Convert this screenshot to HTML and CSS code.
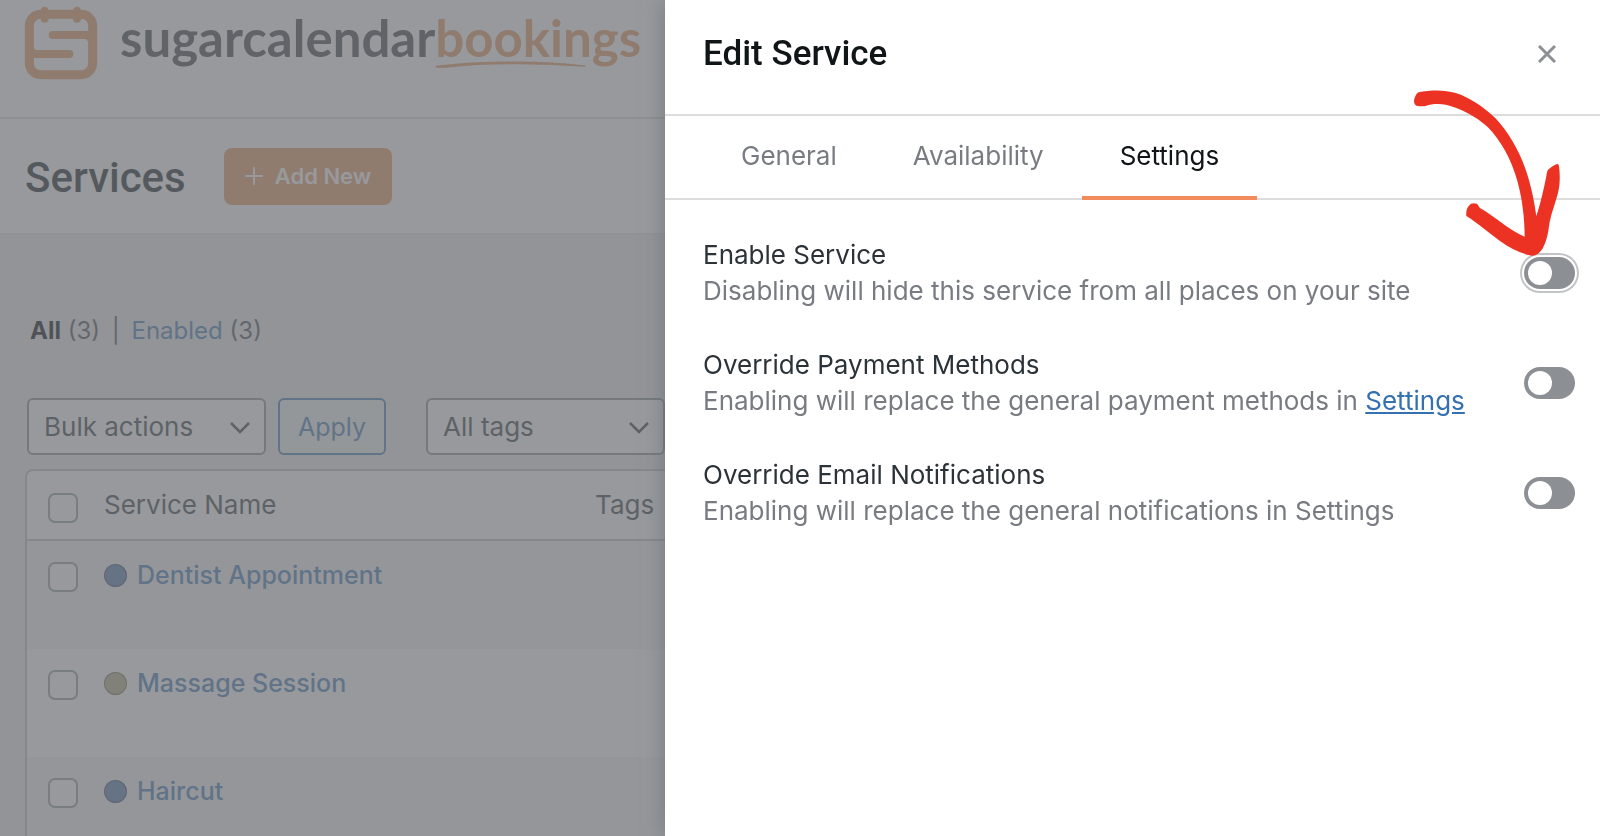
FILE: index.html
```html
<!DOCTYPE html>
<html lang="en">
<head>
    <meta charset="UTF-8">
    <meta name="viewport" content="width=device-width, initial-scale=1.0">
    <title>Services - Sugar Calendar Bookings</title>
    <link rel="stylesheet" href="styles.css">
</head>
<body>
    <div class="page">
        <header class="brand">
            <svg class="brand-icon" viewBox="72 18 222 222" fill="none" stroke="currentColor" aria-hidden="true">
                <rect x="88" y="43" width="190" height="181" rx="34" stroke-width="27"/>
                <path d="M264 105H158M100 162H208" stroke-width="24" stroke-linecap="round"/>
                <path d="M100 138Q101 150 112 151H100ZM265 129Q264 118 253 116H265Z" fill="currentColor" stroke="none"/>
                <g fill="currentColor" stroke="none">
                    <circle cx="134" cy="31" r="11"/><circle cx="134" cy="56" r="12"/>
                    <circle cx="231" cy="31" r="11"/><circle cx="231" cy="56" r="12"/>
                </g>
            </svg>
            <div class="brand-name">sugarcalendar<span class="brand-accent">bookings<svg class="brand-swash" viewBox="0 0 454 20" aria-hidden="true"><path d="M2 14Q110 0 240 1Q360 1 451 13Q456 18 448 17Q340 8 230 9Q120 9 50 18Q20 21 2 19Z" fill="currentColor"/></svg></span></div>
        </header>

        <div class="title-bar">
            <h1>Services</h1>
            <button type="button" class="add-new">
                <svg viewBox="0 0 18 18" aria-hidden="true"><path d="M9 1V17M1 9H17" stroke="currentColor" stroke-width="2" stroke-linecap="round"/></svg>
                Add New
            </button>
        </div>

        <main class="content">
            <div class="views">
                <a href="#" class="current">All</a> <span>(3)</span>
                <span class="divider">|</span>
                <a href="#">Enabled</a> <span>(3)</span>
            </div>

            <div class="filters">
                <div class="select-box">
                    <select aria-label="Bulk actions">
                        <option>Bulk actions</option>
                    </select>
                    <svg viewBox="0 0 20 12" aria-hidden="true"><path d="M1 1L10 10L19 1" fill="none" stroke="currentColor" stroke-width="2.5"/></svg>
                </div>
                <button type="button" class="apply">Apply</button>
                <div class="select-box tags-box">
                    <select aria-label="Tags">
                        <option>All tags</option>
                    </select>
                    <svg viewBox="0 0 20 12" aria-hidden="true"><path d="M1 1L10 10L19 1" fill="none" stroke="currentColor" stroke-width="2.5"/></svg>
                </div>
            </div>

            <table class="services">
                <thead>
                    <tr>
                        <th class="check"><input type="checkbox" aria-label="Select all"></th>
                        <th class="name">Service Name</th>
                        <th>Tags</th>
                    </tr>
                </thead>
                <tbody>
                    <tr>
                        <td class="check"><input type="checkbox" aria-label="Select Dentist Appointment"></td>
                        <td><a href="#"><span class="dot blue"></span>Dentist Appointment</a></td>
                        <td></td>
                    </tr>
                    <tr>
                        <td class="check"><input type="checkbox" aria-label="Select Massage Session"></td>
                        <td><a href="#"><span class="dot olive"></span>Massage Session</a></td>
                        <td></td>
                    </tr>
                    <tr>
                        <td class="check"><input type="checkbox" aria-label="Select Haircut"></td>
                        <td><a href="#"><span class="dot blue"></span>Haircut</a></td>
                        <td></td>
                    </tr>
                </tbody>
            </table>
        </main>
    </div>

    <div class="overlay"></div>

    <aside class="drawer" role="dialog" aria-labelledby="drawer-title">
        <div class="drawer-header">
            <h2 id="drawer-title">Edit Service</h2>
            <button type="button" class="close" aria-label="Close">
                <svg viewBox="0 0 18 18" aria-hidden="true"><path d="M1 1L17 17M17 1L1 17" stroke="currentColor" stroke-width="3"/></svg>
            </button>
        </div>

        <div class="tabs" role="tablist">
            <button type="button" role="tab">General</button>
            <button type="button" role="tab">Availability</button>
            <button type="button" role="tab" class="active" aria-selected="true">Settings</button>
        </div>

        <div class="settings">
            <div class="setting">
                <div>
                    <label for="enable-service">Enable Service</label>
                    <p>Disabling will hide this service from all places on your site</p>
                </div>
                <input type="checkbox" class="toggle focused" id="enable-service">
            </div>
            <div class="setting">
                <div>
                    <label for="override-payment">Override Payment Methods</label>
                    <p>Enabling will replace the general payment methods in <a href="#">Settings</a></p>
                </div>
                <input type="checkbox" class="toggle" id="override-payment">
            </div>
            <div class="setting">
                <div>
                    <label for="override-email">Override Email Notifications</label>
                    <p>Enabling will replace the general notifications in Settings</p>
                </div>
                <input type="checkbox" class="toggle" id="override-email">
            </div>
        </div>

        <svg class="arrow" viewBox="160 88 450 504" aria-hidden="true">
            <path d="M176 98C215 90 256 90 288 100C330 113 372 142 406 174C442 210 478 272 496 324C514 374 525 430 530 470C543 430 552 390 560 350C562 336 563 331 569 327C578 320 585 315 592 313Q597 312 598 320C602 350 601 378 594 404C584 440 573 466 568 500C564 530 558 552 548 568Q534 589 516 588C484 582 452 566 420 543C386 519 352 488 320 469C318 452 324 438 334 432Q342 429 352 432C357 438 358 442 362 446C385 459 410 478 434 495C456 510 477 524 495 531C495 480 489 420 472 360C456 302 424 242 384 202C350 170 300 146 262 136C238 131 215 133 200 138Q188 142 170 138Q158 130 166 112Q170 102 176 98Z" fill="#ec3323"/>
        </svg>
    </aside>
</body>
</html>
```

FILE: styles.css
```css
* {
    box-sizing: border-box;
}
body {
    margin: 0;
    font-family: Inter, "Liberation Sans", sans-serif;
    font-size: 26px;
    line-height: 36px;
    color: #50575e;
    background-color: #eeeeef;
}
h1, h2, p {
    margin: 0;
}
h1, h2 {
    font-family: Roboto, sans-serif;
    font-weight: 500;
}
button, select, input {
    font: inherit;
    margin: 0;
}
a {
    color: #4a80b8;
    text-decoration: none;
}

.page {
    height: 100vh;
    overflow: hidden;
}
.brand {
    display: flex;
    gap: 22px;
    height: 119px;
    padding: 6px 24px 0;
    background-color: #fff;
    border-bottom: 2px solid #dcdcde;
}
.brand-icon {
    width: 74px;
    height: 74px;
    color: #e89a68;
}
.brand-name {
    font-family: Lato, sans-serif;
    font-size: 51px;
    font-weight: 700;
    line-height: 64px;
    color: #484f55;
}
.brand-accent {
    position: relative;
    color: #e89a68;
}
.brand-swash {
    position: absolute;
    left: 0;
    bottom: 0;
    width: 151px;
    height: 7px;
}

.title-bar {
    display: flex;
    align-items: center;
    gap: 38px;
    height: 116px;
    padding: 0 25px;
    background-color: #fff;
    border-bottom: 2px solid #e8e8ea;
}
h1 {
    padding-top: 3px;
    font-size: 42px;
    line-height: 50px;
    color: #1d2a2e;
}
.add-new {
    display: flex;
    align-items: center;
    gap: 12px;
    height: 57px;
    padding: 0 21px;
    border: none;
    border-radius: 8px;
    background-color: #e89a68;
    color: #fff;
    font-size: 22px;
    font-weight: 600;
}
.add-new svg {
    width: 18px;
    height: 18px;
}

.content {
    padding: 78px 25px 0;
}
.views {
    padding-left: 5px;
    font-size: 24px;
}
.views .current {
    color: #101517;
    font-weight: 700;
}
.divider {
    margin: 0 5px;
}
.filters {
    display: flex;
    gap: 12px;
    margin: 49px 2px 14px;
}
.select-box {
    position: relative;
    width: 239px;
    color: #3c464b;
}
.tags-box {
    margin-left: 28px;
}
.select-box select {
    appearance: none;
    width: 100%;
    height: 57px;
    padding: 0 15px;
    border: 2px solid #8c9599;
    border-radius: 6px;
    background-color: #fff;
    color: inherit;
}
.select-box svg {
    position: absolute;
    right: 16px;
    top: 24px;
    width: 20px;
    height: 12px;
}
.apply {
    height: 57px;
    padding: 0 18px;
    border: 2px solid #4a80b8;
    border-radius: 6px;
    background-color: #f6f7f7;
    color: #4a80b8;
    font-size: 25px;
}

.services {
    width: 100%;
    table-layout: fixed;
    border: 2px solid #c3c4c7;
    border-radius: 8px;
    border-spacing: 0;
    background-color: #fff;
}
th, td {
    padding: 0;
    text-align: left;
    vertical-align: top;
}
th {
    height: 70px;
    padding-top: 16px;
    border-bottom: 2px solid #c3c4c7;
    color: #3c464b;
    font-weight: 400;
}
td {
    height: 108px;
    padding-top: 16px;
    font-size: 25px;
    font-weight: 500;
}
tbody tr:nth-child(odd) {
    background-color: #f6f6f7;
}
.check {
    width: 77px;
    padding-left: 21px;
    line-height: 0;
}
td.check {
    padding-top: 21px;
}
th.check {
    padding-top: 22px;
}
.name {
    width: 491px;
}
.check input {
    appearance: none;
    width: 30px;
    height: 30px;
    border: 2px solid #98a0a3;
    border-radius: 7px;
    background-color: #fff;
}
td a {
    display: flex;
    align-items: center;
    gap: 10px;
}
.dot {
    width: 23px;
    height: 23px;
    border: 1px solid rgba(0, 0, 0, 0.3);
    border-radius: 50%;
}
.blue {
    background-color: #5a80b0;
}
.olive {
    background-color: #b4ae8c;
}

.overlay {
    position: fixed;
    inset: 0;
    background-color: rgba(107, 110, 114, 0.7);
}

.drawer {
    position: fixed;
    top: 0;
    right: 0;
    bottom: 0;
    width: 935px;
    background-color: #fff;
    box-shadow: 0 0 20px rgba(90, 105, 110, 0.6);
}
.drawer-header {
    display: flex;
    justify-content: space-between;
    align-items: center;
    padding: 35px 44px 41px 38px;
    border-bottom: 2px solid #dcdcde;
}
h2 {
    font-size: 35px;
    line-height: 38px;
    color: #101517;
}
.close {
    display: flex;
    padding: 0;
    border: none;
    background: none;
    color: #8c8f94;
}
.close svg {
    width: 18px;
    height: 18px;
}
.tabs {
    display: flex;
    padding: 0 38px;
    border-bottom: 2px solid #dcdcde;
}
.tabs button {
    margin-bottom: -2px;
    padding: 22px 38px;
    border: none;
    border-bottom: 4px solid transparent;
    background: none;
    color: #787c82;
}
.tabs .active {
    border-bottom-color: #f28c5c;
    color: #101517;
}
.settings {
    display: flex;
    flex-direction: column;
    gap: 38px;
    padding: 37px 25px 37px 38px;
}
.setting {
    display: flex;
    justify-content: space-between;
    align-items: center;
}
.setting label {
    display: block;
    color: #2c3338;
}
.setting p {
    color: #787c82;
}
.setting a {
    color: #3571b0;
    text-decoration: underline;
}
.toggle {
    appearance: none;
    display: flex;
    width: 51px;
    height: 32px;
    padding: 4px;
    border-radius: 16px;
    background-color: #8c8f94;
}
.toggle::before {
    content: "";
    width: 24px;
    height: 24px;
    border-radius: 50%;
    background-color: #fff;
}
.toggle:checked {
    justify-content: flex-end;
    background-color: #f28c5c;
}
.focused {
    box-shadow: 0 0 0 2px #fff, 0 0 0 4px #c3c4c7;
}
.arrow {
    position: absolute;
    top: 89px;
    right: 37px;
    width: 150px;
    height: 168px;
}
```
